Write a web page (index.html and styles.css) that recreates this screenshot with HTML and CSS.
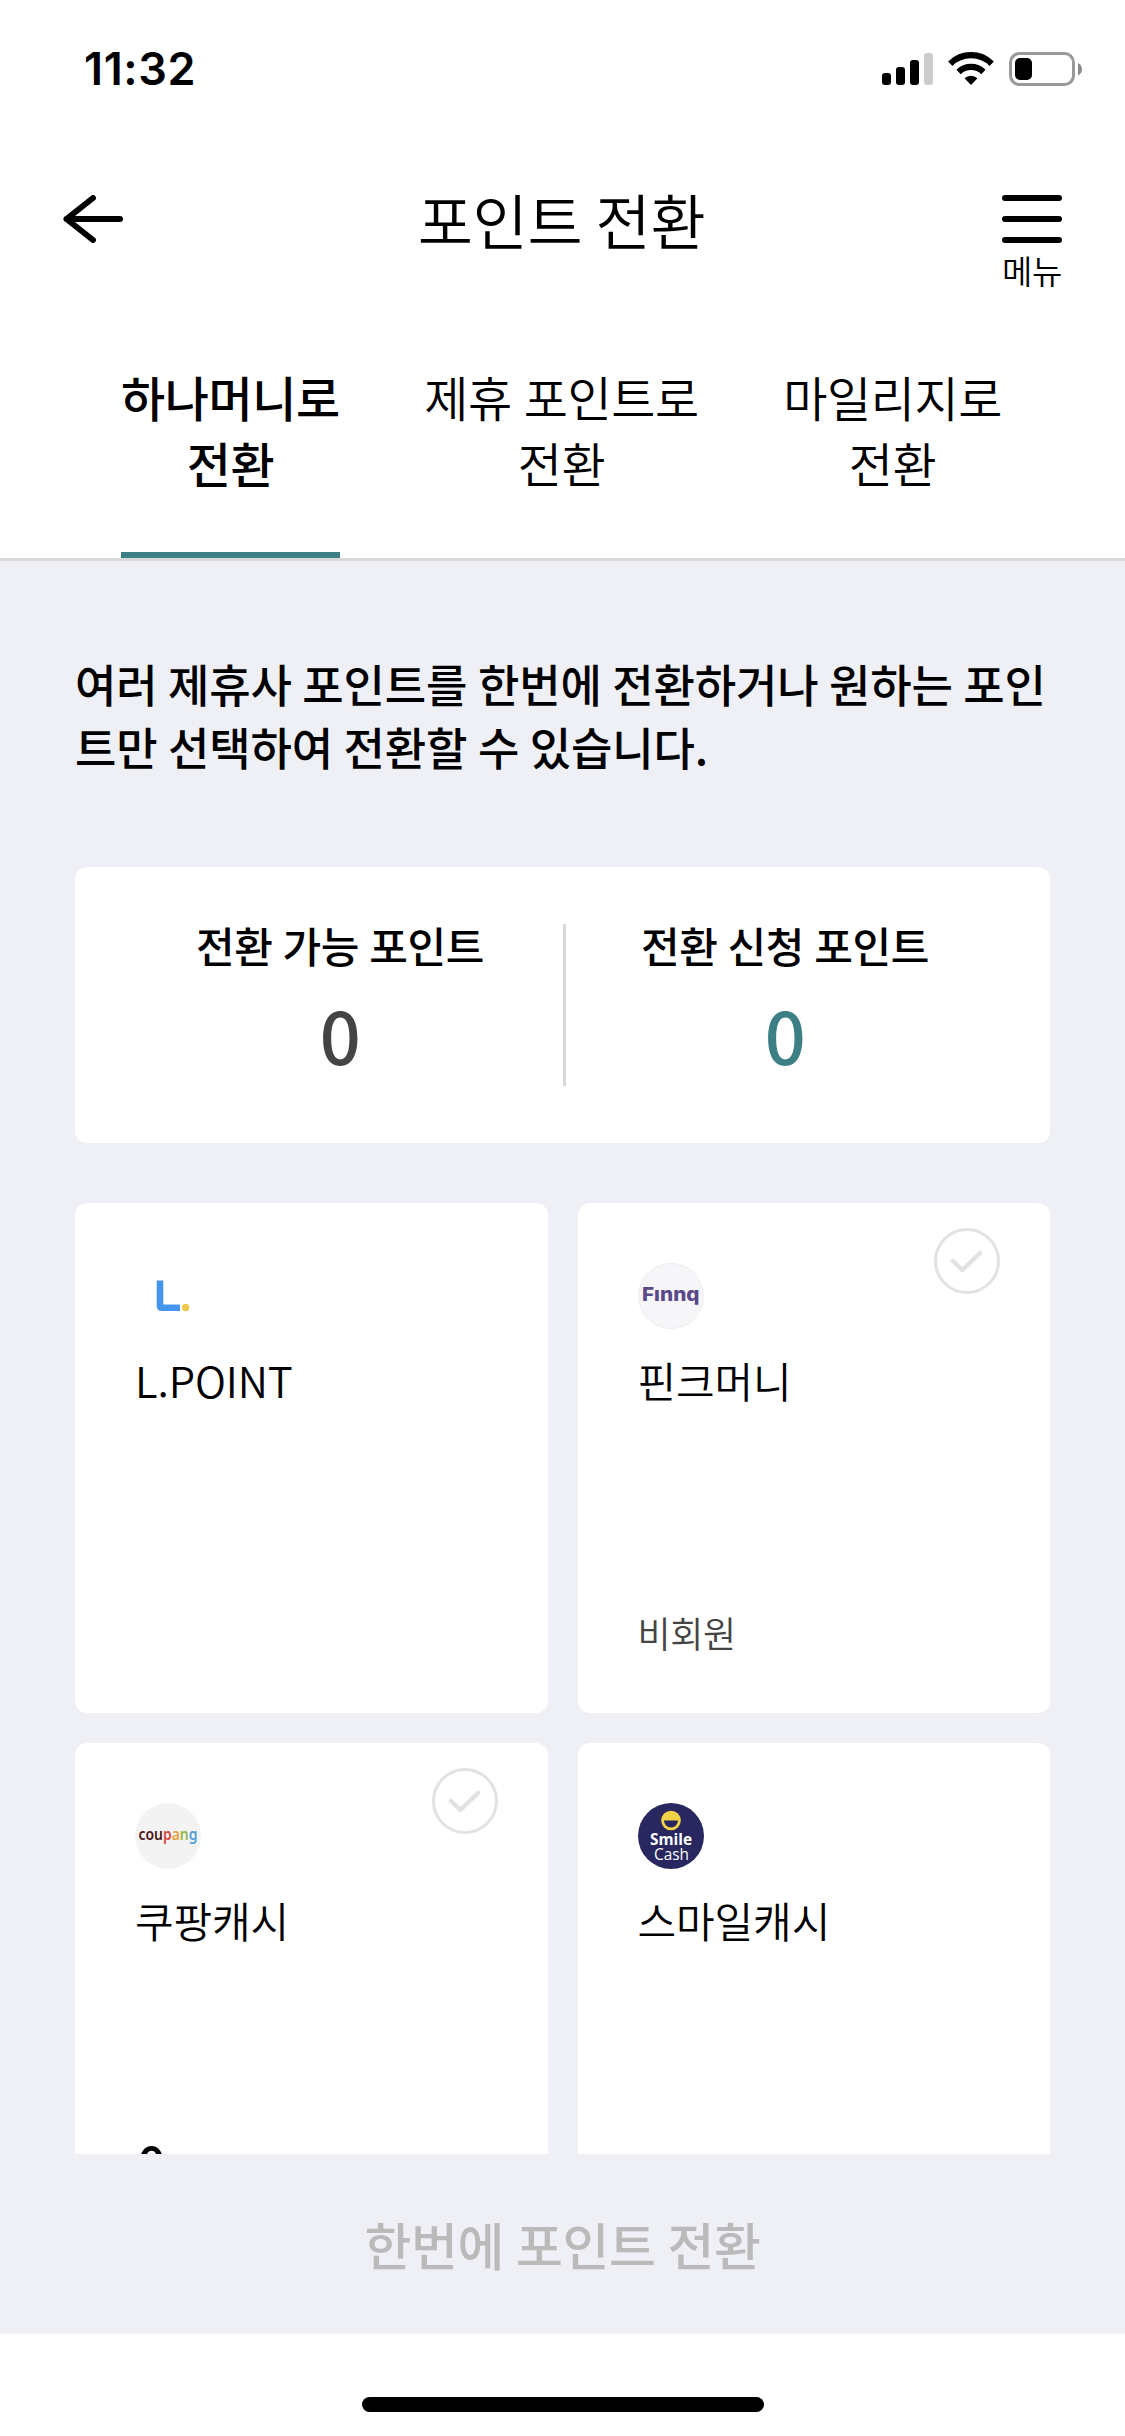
FILE: index.html
```html
<!DOCTYPE html>
<html lang="ko">
<head>
<meta charset="utf-8">
<title>포인트 전환</title>
<link rel="stylesheet" href="styles.css">
</head>
<body>
<div class="screen">
  <div class="status">
    <span class="time">11:32</span>
    <svg class="status-icons" width="200" height="34" viewBox="0 0 200 34">
      <rect x="0" y="21" width="9" height="12" rx="3"/>
      <rect x="14" y="15" width="9" height="18" rx="3"/>
      <rect x="28" y="8" width="9" height="25" rx="3"/>
      <rect x="42" y="1" width="9" height="32" rx="3" fill="#ccc"/>
      <g fill="none" stroke="#000" stroke-width="6.2">
        <path d="M68.3 11.7a29.5 29.5 0 0 1 41.4 0"/>
        <path d="M76.6 20a17.8 17.8 0 0 1 24.8 0"/>
      </g>
      <path d="M82.5 26.2a9.5 9.5 0 0 1 13 0L89 33z"/>
      <rect x="128.5" y="1.5" width="63" height="31" rx="9" fill="none" stroke="#999" stroke-width="3"/>
      <rect x="133" y="6" width="17" height="22" rx="5"/>
      <path d="M196 11c5.300 2.500 5.300 10 0 12.500z" fill="#888"/>
    </svg>
  </div>
  <header class="header">
    <svg class="back" width="60" height="48" viewBox="0 0 60 48" fill="none" stroke="#000" stroke-width="6" stroke-linecap="round" stroke-linejoin="round"><path d="M57 24H3.500M30 3L3.500 24L30 45"/></svg>
    <h1 class="title">포인트 전환</h1>
    <div class="menu">
      <svg width="60" height="48" viewBox="0 0 60 48" fill="none" stroke="#000" stroke-width="6" stroke-linecap="round"><path d="M3 3H57M3 24H57M3 45H57"/></svg>
      <span class="menu-label">메뉴</span>
    </div>
  </header>
  <nav class="tabs">
    <div class="tab active">하나머니로<br>전환</div>
    <div class="tab">제휴 포인트로<br>전환</div>
    <div class="tab">마일리지로<br>전환</div>
  </nav>
  <main class="content">
    <p class="intro">여러 제휴사 포인트를 한번에 전환하거나 원하는 포인트만 선택하여 전환할 수 있습니다.</p>
    <section class="summary">
      <div class="sum"><span class="sum-label">전환 가능 포인트</span><span class="sum-value">0</span></div>
      <div class="sum"><span class="sum-label">전환 신청 포인트</span><span class="sum-value accent">0</span></div>
    </section>
    <section class="grid">
      <article class="card">
        <svg class="logo" viewBox="0 0 66 66"><path d="M25 17.500V42.700q0 2 2 2H45" fill="none" stroke="#4595ee" stroke-width="6.600"/><circle cx="50.600" cy="44.500" r="3.700" fill="#f0c94c"/></svg>
        <h2 class="name">L.POINT</h2>
      </article>
      <article class="card">
        <svg class="logo" viewBox="0 0 66 66"><circle cx="33" cy="33" r="32.500" fill="#f6f6f9" stroke="#ededf1"/><text class="finnq" x="4" y="38.300" textLength="57.500" lengthAdjust="spacingAndGlyphs">Fınnq</text></svg>
        <svg class="check" viewBox="0 0 66 66"><circle cx="33" cy="33" r="31.500"/><path d="M19 33L28.300 42L46 25"/></svg>
        <h2 class="name">핀크머니</h2>
        <p class="note">비회원</p>
      </article>
      <article class="card">
        <svg class="logo" viewBox="0 0 66 66"><circle cx="33" cy="33" r="33" fill="#f3f3f3"/><text class="coupang" x="3.500" y="36.500" textLength="59" lengthAdjust="spacingAndGlyphs"><tspan fill="#4c1317">cou</tspan><tspan fill="#d5483d">p</tspan><tspan fill="#e7a23b">a</tspan><tspan fill="#94b944">n</tspan><tspan fill="#559cd8">g</tspan></text></svg>
        <svg class="check" viewBox="0 0 66 66"><circle cx="33" cy="33" r="31.500"/><path d="M19 33L28.300 42L46 25"/></svg>
        <h2 class="name">쿠팡캐시</h2>
        <p class="amount">0</p>
      </article>
      <article class="card">
        <svg class="logo" viewBox="0 0 66 66"><circle cx="33" cy="33" r="33" fill="#28275f"/><circle cx="33" cy="17.500" r="9.800" fill="#f2d146"/><path d="M26 17.500h14a7 7 0 0 1-14 0z" fill="#28275f"/><text class="smile" x="12" y="42" textLength="42" lengthAdjust="spacingAndGlyphs">Smile</text><text class="cash" x="16" y="57" textLength="35" lengthAdjust="spacingAndGlyphs">Cash</text></svg>
        <h2 class="name">스마일캐시</h2>
      </article>
    </section>
  </main>
  <div class="submit">한번에 포인트 전환</div>
  <div class="home"><div class="home-bar"></div></div>
</div>
</body>
</html>
```
FILE: styles.css
```css
* { box-sizing: border-box; margin: 0; padding: 0; }
body { background: #fff; color: #000; font-family: "Noto Sans CJK KR", sans-serif; letter-spacing: -0.4px; }
.screen { width: 1125px; height: 2436px; display: flex; flex-direction: column; overflow: hidden; }
.status { height: 132px; flex: none; display: flex; justify-content: space-between; align-items: flex-start; padding: 52px 43px 0 84px; }
.time { font: 600 45px/34px Inter, sans-serif; letter-spacing: 0.6px; }
.header { height: 210px; flex: none; display: flex; justify-content: space-between; align-items: flex-start; padding: 63px 63px 0 63px; }
.title { font-size: 60px; font-weight: 350; line-height: 60px; margin-top: -6px; padding-right: 2px; word-spacing: -3px; }
.menu { width: 60px; display: flex; flex-direction: column; align-items: center; gap: 9px; }
.menu svg { flex: none; display: block; }
.menu-label { font-size: 33px; line-height: 36px; white-space: nowrap; font-weight: 350; }
.tabs { height: 219px; flex: none; display: flex; justify-content: space-between; padding: 0 123px 0 121px; border-bottom: 3px solid #d8d8d8; }
.tab { padding-top: 21px; font-size: 48px; line-height: 66px; text-align: center; font-weight: 350; white-space: nowrap; word-spacing: -1px; }
.active { font-weight: 500; border-bottom: 6px solid #3c8085; }
.content { height: 1593px; flex: none; background: #eff0f5; padding: 91px 75px 0; overflow: hidden; }
.intro { font-size: 45px; line-height: 63px; font-weight: 500; word-break: break-all; letter-spacing: -0.15px; word-spacing: -1.9px; }
.summary { margin-top: 89px; height: 276px; border-radius: 12px; background: #fff; display: flex; padding: 57px 42px; }
.sum { width: 438px; height: 162px; flex: none; display: flex; flex-direction: column; align-items: center; gap: 20px; }
.sum:first-child { border-right: 3px solid #d8d8d8; width: 449px; }
.sum-label { margin-top: -4px; font-size: 42px; line-height: 50px; font-weight: 500; word-spacing: -1.2px; }
.sum-value { font-size: 72px; line-height: 88px; font-weight: 500; color: #444; }
.sum-value.accent { color: #3c8085; }
.grid { margin-top: 60px; display: grid; grid-template-columns: 1fr 1fr; grid-auto-rows: 510px; gap: 30px; }
.card { position: relative; background: #fff; border-radius: 12px; padding: 60px; display: flex; flex-direction: column; }
.logo { width: 66px; height: 66px; flex: none; letter-spacing: 0; }
.name { margin-top: 21px; font-size: 42px; line-height: 60px; font-weight: 350; letter-spacing: -0.1px; }
.note { margin-top: auto; font-size: 36px; line-height: 42px; font-weight: 350; color: #444; }
.amount { margin-top: auto; padding-left: 2px; font-size: 51px; line-height: 60px; font-weight: 500; }
.check { position: absolute; top: 25px; right: 50px; width: 66px; height: 66px; fill: none; stroke: #e2e2e2; stroke-width: 3; }
.check path { stroke-width: 4.5; stroke-linecap: round; stroke-linejoin: round; }
.finnq { font: 800 19px Inter, sans-serif; fill: #594989; }
.coupang { font: 600 16px "Noto Sans", sans-serif; }
.smile { font: 700 16px "Open Sans", sans-serif; fill: #fff; }
.cash { font: 400 16px "Open Sans", sans-serif; fill: #fff; }
.submit { height: 180px; flex: none; background: #eff0f5; padding-bottom: 1px; display: flex; align-items: center; justify-content: center; font-size: 51px; font-weight: 500; color: #bababa; word-spacing: -2px; }
.home { flex: 1; display: flex; justify-content: center; padding-top: 63px; }
.home-bar { width: 402px; height: 15px; border-radius: 8px; background: #000; }
```
